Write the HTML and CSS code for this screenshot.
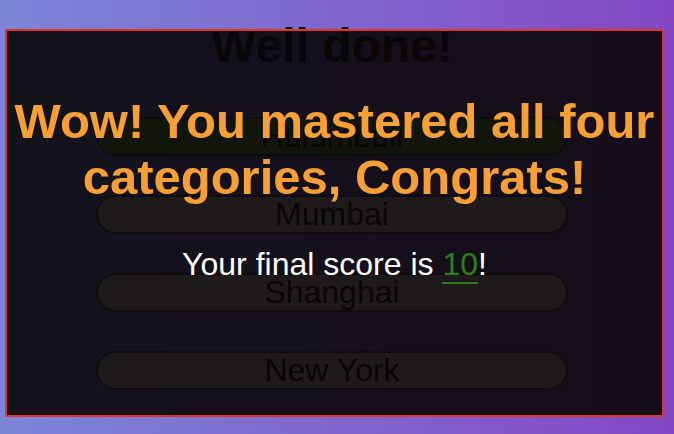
FILE: index.html
```html
<!DOCTYPE html>
<html lang="en">
<head>
<meta charset="utf-8">
<title>Quiz</title>
<link rel="stylesheet" href="styles.css">
</head>
<body>
<main class="quiz">
  <h1 class="title">Well done!</h1>
  <div class="answers">
    <button class="answer correct">Hulumbuli</button>
    <button class="answer">Mumbai</button>
    <button class="answer">Shanghai</button>
    <button class="answer">New York</button>
  </div>
</main>
<div class="overlay">
  <h2 class="congrats">Wow! You mastered all four categories, Congrats!</h2>
  <p class="score">Your final score is <span class="points">10</span>!</p>
</div>
</body>
</html>
```
FILE: styles.css
```css
html, body {
  margin: 0;
  height: 100%;
}
body {
  background: linear-gradient(to right, #7b86d8, #8447c4);
  font-family: "Liberation Sans", Arial, sans-serif;
  overflow: hidden;
}
.quiz {
  width: 664px;
  padding-top: 18px;
  display: flex;
  flex-direction: column;
  align-items: center;
}
.title {
  margin: 0;
  font-size: 48px;
  font-weight: bold;
  color: #000;
  line-height: normal;
}
.answers {
  margin-top: 44px;
  display: flex;
  flex-direction: column;
  gap: 39px;
}
.answer {
  width: 472px;
  height: 39px;
  padding: 0;
  border: 2px solid #454048;
  border-radius: 20px;
  background: #d9c3c8;
  color: #000;
  font-family: "Liberation Sans", Arial, sans-serif;
  font-size: 32px;
  line-height: 35px;
}
.answer.correct {
  background: #6a9a18;
}
.overlay {
  position: absolute;
  left: 5px;
  top: 29px;
  width: 655px;
  height: 384px;
  border: 2px solid #e2332a;
  background: rgba(9, 7, 8, 0.9);
  text-align: center;
  padding-top: 62px;
  box-sizing: content-box;
}
.overlay {
  height: 322px;
}
.congrats {
  margin: 0;
  font-size: 49px;
  font-weight: bold;
  color: #f69f34;
  line-height: normal;
}
.score {
  margin: 41px 0 0;
  font-size: 32px;
  color: #fff;
  line-height: normal;
}
.points {
  color: #2b7d20;
  border-bottom: 2px solid #2b7d20;
}
```
